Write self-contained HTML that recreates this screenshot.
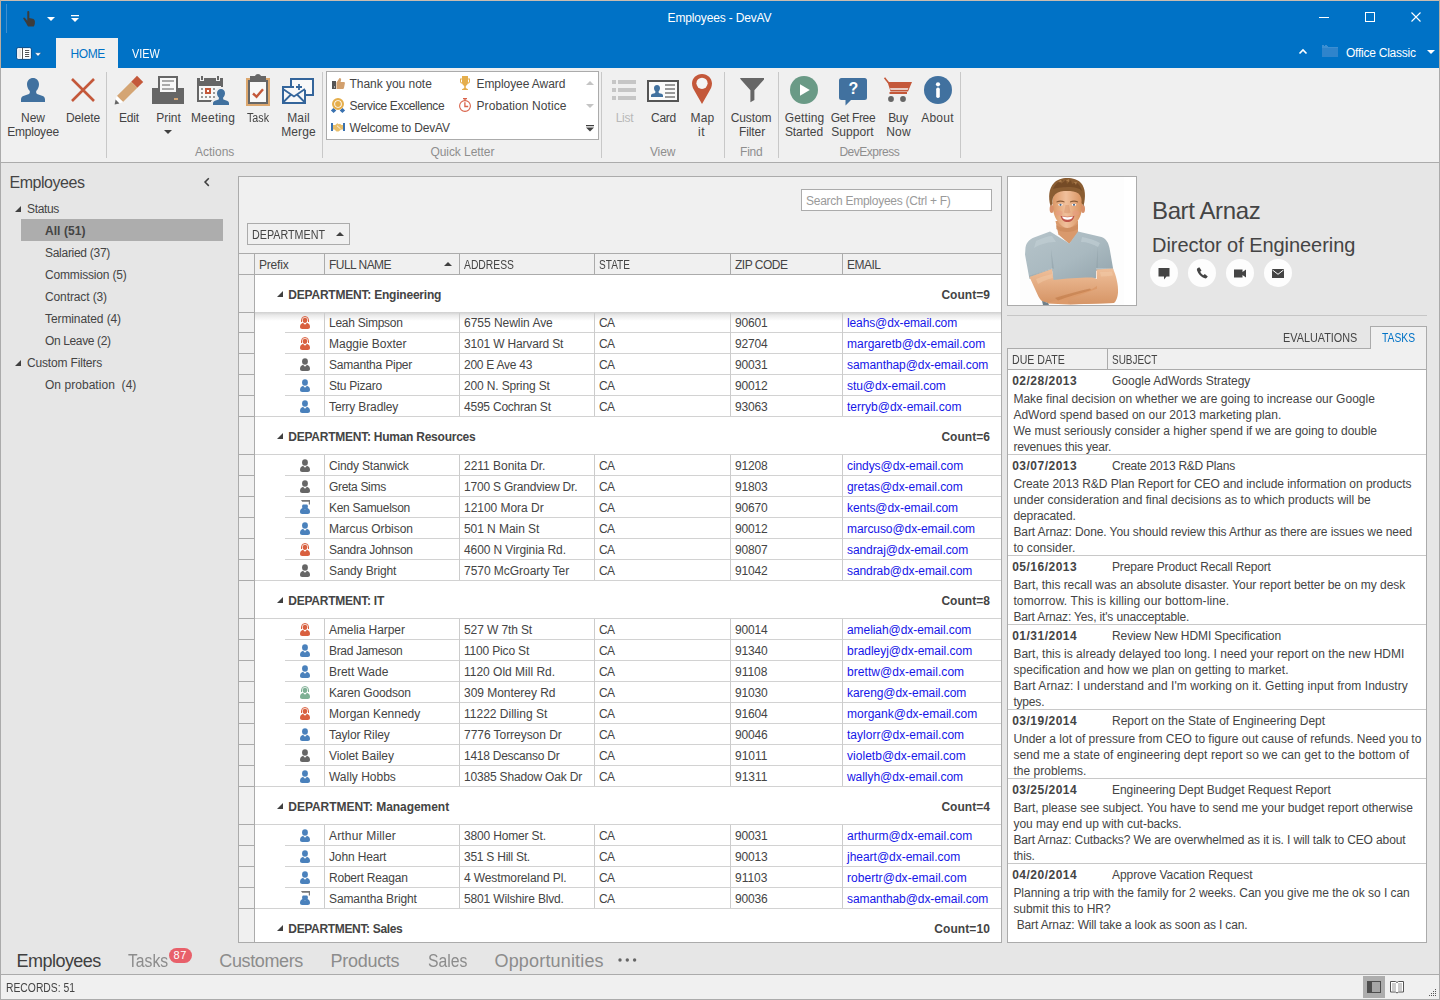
<!DOCTYPE html>
<html>
<head>
<meta charset="utf-8">
<title>Employees - DevAV</title>
<style>
*{box-sizing:border-box;margin:0;padding:0}
html,body{width:1440px;height:1000px;overflow:hidden}
body{font-family:"Liberation Sans",sans-serif;font-size:12px;color:#444444;background:#e6e6e6;position:relative}
.abs{position:absolute}
.t{position:absolute;white-space:pre;line-height:16px}
svg{position:absolute;overflow:visible}
/* window frame */
#frame{position:absolute;left:0;top:0;width:1440px;height:1000px;border:1px solid #ababab;border-top-color:#c9bcb0;pointer-events:none;z-index:50}
#titlebar{position:absolute;left:1px;top:1px;width:1438px;height:67px;background:#0072c6}
#ribbon{position:absolute;left:1px;top:68px;width:1438px;height:94px;background:#f0f0f0}
#ribbonline{position:absolute;left:1px;top:162px;width:1438px;height:1px;background:#ababab}
.rsep{position:absolute;top:72px;width:1px;height:86px;background:#c8c8c8}
.rl{position:absolute;white-space:nowrap;text-align:center;line-height:14px;font-size:12px;color:#404040;letter-spacing:-0.2px;transform:translateX(-50%)}
.gl{position:absolute;white-space:nowrap;font-size:12px;line-height:14px;color:#9a9a9a;transform:translateX(-50%);top:145px;letter-spacing:-0.2px}
</style>
</head>
<body>
<div id="titlebar"></div>
<div id="ribbon"></div>
<div id="ribbonline"></div>
<div class="abs" style="left:6px;top:4px;width:1px;height:29px;background:#3d8fd2"></div>
<svg style="left:22.500px;top:10.500px" width="13" height="15.800" viewBox="0 0 14 17"><path fill="#3c3c3c" d="M4.6 1.2c0-.7.5-1.2 1.1-1.2s1.1.5 1.1 1.2v6.2l3.6.9c1.5.4 2.4 1.3 2.4 2.8v1.8c0 1.6-.7 3.1-1.300 3.800H5.500c-.6-1-1.900-3.400-3.100-5.200l-1.900-2.800c-.4-.6-.3-1.200.2-1.500.5-.3 1.100-.1 1.500.4l2.400 3z"/></svg>
<svg style="left:47px;top:17px" width="8" height="4"><path fill="#fff" d="M0 0h8l-4 4z"/></svg>
<svg style="left:71px;top:15px" width="8" height="7"><path fill="#fff" d="M0 0h8v1.200h-8zM0 3h8l-4 4z"/></svg>
<div class="t" style="left:667.571px;top:10px;font-size:12px;line-height:16px;letter-spacing:-0.155px;color:#fff;">Employees - DevAV</div>
<div class="abs" style="left:1319px;top:17px;width:10px;height:1px;background:#fff"></div>
<div class="abs" style="left:1365px;top:12px;width:10px;height:10px;border:1px solid #fff"></div>
<svg style="left:1411px;top:12px" width="10" height="10"><path stroke="#fff" stroke-width="1.1" fill="none" d="M0.500 0.500l9 9M9.500 0.500l-9 9"/></svg>
<svg style="left:16px;top:47px" width="16" height="13" viewBox="0 0 16 13"><rect x="0.600" y="0.600" width="14.800" height="11.800" rx="1.500" fill="#fff" stroke="#004a8c" stroke-width="1"/><rect x="2.300" y="2.200" width="2.600" height="8.600" fill="#e6e6e6"/><rect x="6" y="0.800" width="1" height="11.400" fill="#555"/><path fill="#555" d="M9 3h4.200v1h-4.200zM9 5h4.200v1h-4.200zM9 7h4.200v1h-4.200zM9 9h4.200v1h-4.200z"/></svg>
<svg style="left:34px;top:52px" width="8" height="5"><path fill="#fff" stroke="#004a8c" stroke-width=".5" d="M0.700 0.800h6.600l-3.300 3.500z"/></svg>
<div class="abs" style="left:56px;top:38px;width:62px;height:30px;background:#f0f0f0"></div>
<div class="t" style="left:70.5px;top:46px;font-size:12px;line-height:16px;letter-spacing:-0.396px;color:#0072c6;">HOME</div>
<div class="t" style="left:132px;top:46px;font-size:12px;line-height:16px;letter-spacing:0px;color:#fff;transform:scaleX(0.9067);transform-origin:0 0;">VIEW</div>
<svg style="left:1299px;top:49px" width="8" height="5"><path stroke="#fff" stroke-width="1.600" fill="none" d="M0.5 4.500l3.500-3.500l3.500 3.500"/></svg>
<svg style="left:1322px;top:45px" width="16" height="12" viewBox="0 0 16 12"><path fill="#3d8fd2" d="M0 0h2v1h1v-1h2v1h1v1h10v10h-16z"/><path fill="#2f84cc" d="M0 3h16v9h-16z"/></svg>
<div class="t" style="left:1346px;top:44.5px;font-size:12px;line-height:16px;letter-spacing:-0.249px;color:#fff;">Office Classic</div>
<svg style="left:1427px;top:50px" width="8" height="4"><path fill="#fff" d="M0 0h8l-4 4z"/></svg>
<div class="rsep" style="left:106px"></div>
<div class="rsep" style="left:322px"></div>
<div class="rsep" style="left:601px"></div>
<div class="rsep" style="left:724px"></div>
<div class="rsep" style="left:778px"></div>
<div class="rsep" style="left:960px"></div>
<svg style="left:21px;top:78px" width="24" height="24" viewBox="0 0 24 24"><path fill="#41719f" d="M12 0c3.400 0 6 2.600 6 6.200c0 2.600-1.200 5.200-2.800 6.700v1.600c0 .9.500 1.500 1.500 1.800l4.300 1.400c1.900.6 3 1.800 3 3.800v2.500h-24v-2.500c0-2 1.100-3.200 3-3.800l4.300-1.400c1-.3 1.500-.9 1.500-1.800v-1.600c-1.600-1.500-2.800-4.100-2.800-6.700c0-3.600 2.600-6.200 6-6.200z"/></svg>
<div class="t" style="left:21.0352px;top:111px;font-size:12px;line-height:14px;letter-spacing:-0.025px;">New</div>
<div class="t" style="left:7.13086px;top:125px;font-size:12px;line-height:14px;letter-spacing:-0.203px;">Employee</div>
<svg style="left:71px;top:78px" width="24" height="24"><path stroke="#c4583a" stroke-width="2.600" fill="none" d="M1 1l22 22M23 1l-22 22"/></svg>
<div class="t" style="left:65.8936px;top:111px;font-size:12px;line-height:14px;letter-spacing:-0.079px;">Delete</div>
<svg style="left:114px;top:75px" width="30" height="30" viewBox="0 0 30 30">
<path fill="#c4583a" d="M23 0.800l6.200 6.100l-5.900 5.900l-6.100-6.100z"/>
<path fill="#d4a574" d="M17.200 6.700l6.100 6.100l-14.300 14.300l-6.100-6.100z"/>
<path fill="#fff" d="M2.900 21l6.100 6.100l-3.600 1.300l-3.800-3.800z"/>
<path fill="#666666" d="M1.600 24.600l3.800 3.800l-4.800 1.200z"/></svg>
<div class="t" style="left:118.945px;top:111px;font-size:12px;line-height:14px;letter-spacing:-0.142px;">Edit</div>
<svg style="left:152px;top:76px" width="32" height="28" viewBox="0 0 32 28">
<path fill="#666666" d="M0 12h32v16h-32z"/><path fill="#666666" d="M6 0h20v16h-20z"/><path fill="#f8f8f8" d="M8 2h16v14h-16z"/>
<path fill="#ababab" d="M10 4h12v2h-12zM10 8h8v2h-8zM10 12h12v2h-12z"/><path fill="#d4a574" d="M22 22h4v2h-4z"/></svg>
<div class="t" style="left:156.169px;top:111px;font-size:12px;line-height:14px;letter-spacing:-0.003px;">Print</div>
<svg style="left:164px;top:130px" width="8" height="4"><path fill="#404040" d="M0 0h8l-4 4z"/></svg>
<svg style="left:197px;top:76px" width="33" height="30" viewBox="0 0 33 30">
<path fill="#666666" d="M0 2h26v24h-26z"/><path fill="#f8f8f8" d="M2 10h22v14h-22z"/>
<path fill="#f0f0f0" d="M3 0h4v5h-4zM19 0h4v5h-4z"/><path fill="#666666" d="M4 0h2v4h-2zM20 0h2v4h-2z"/>
<path fill="#999" d="M4 12h2v2h-2zM4 16h2v2h-2zM4 20h2v2h-2zM8 20h2v2h-2zM12 20h2v2h-2zM16 20h2v2h-2zM16 12h2v2h-2zM16 16h2v2h-2z"/>
<path fill="#c4583a" d="M8 12h6v6h-6z"/><path fill="#fff" d="M10 14h2v2h-2z"/>
<path fill="#f0f0f0" d="M14 30v-5l4-3v-8l4-3h4l4 3v8l3 3v5z"/></svg>
<svg style="left:213px;top:88px" width="16" height="18" viewBox="0 0 24 24"><path fill="#41719f" d="M12 0c3.400 0 6 2.600 6 6.200c0 2.600-1.200 5.200-2.800 6.700v1.600c0 .9.500 1.500 1.500 1.800l4.300 1.400c1.900.6 3 1.800 3 3.800v2.500h-24v-2.500c0-2 1.100-3.200 3-3.800l4.300-1.400c1-.3 1.500-.9 1.500-1.800v-1.600c-1.600-1.500-2.800-4.100-2.800-6.700c0-3.600 2.600-6.200 6-6.200z"/></svg>
<div class="t" style="left:190.919px;top:111px;font-size:12px;line-height:14px;letter-spacing:0.21px;">Meeting</div>
<svg style="left:246px;top:74px" width="24" height="32" viewBox="0 0 24 32">
<path fill="#dca76e" d="M0 4h24v28h-24z"/><path fill="#666666" d="M2 6h20v24h-20z"/><path fill="#f8f8f8" d="M4 8h16v20h-16z"/>
<path fill="#666666" d="M4 2h5c.5-1.200 1.600-2 3-2s2.500.8 3 2h5v6h-16z"/>
<path fill="none" stroke="#c4583a" stroke-width="2.400" d="M7 19.500l3.500 3.200l6.500-7.500"/></svg>
<div class="t" style="left:247px;top:111px;font-size:12px;line-height:14px;letter-spacing:0px;transform:scaleX(0.8916);transform-origin:0 0;">Task</div>
<svg style="left:282px;top:78px" width="32" height="26" viewBox="0 0 32 26">
<rect x="9" y="1" width="22" height="16" fill="#f8f8f8" stroke="#34659b" stroke-width="2"/>
<rect x="1" y="9" width="22" height="16" fill="#f8f8f8" stroke="#34659b" stroke-width="2"/>
<path fill="#f8f8f8" d="M12 6h12v6h-12z"/>
<path fill="none" stroke="#34659b" stroke-width="1.800" d="M1 11l11 7.500l11-7.500M1 24.500l8-8M23 24.500l-8-8M17 6v6M14 9h6"/></svg>
<div class="t" style="left:287.15px;top:111px;font-size:12px;line-height:14px;letter-spacing:0.174px;">Mail</div>
<div class="t" style="left:281.212px;top:125px;font-size:12px;line-height:14px;letter-spacing:0.112px;">Merge</div>
<div class="t" style="left:195.115px;top:145px;font-size:12px;line-height:14px;letter-spacing:-0.026px;color:#8e8e8e;">Actions</div>
<div class="abs" style="left:326px;top:71px;width:273px;height:69px;background:#fff;border:1px solid #ababab"></div>
<svg style="left:332px;top:78px" width="13" height="11" viewBox="0 0 13 11"><path fill="#555" d="M0 3h4v8h-4z"/><path fill="#fff" d="M2 8.500h1v1h-1z"/>
<path fill="#d2a06e" d="M4.500 4.500l3-4.500c1.300 0 1.800.8 1.600 1.800l-.5 2.200h3.200c.8 0 1.200.6 1.100 1.300l-.9 4.700c-.2.700-.6 1-1.300 1h-6.200z"/></svg>
<div class="t" style="left:349.5px;top:77px;font-size:12px;line-height:14px;letter-spacing:-0.03px;">Thank you note</div>
<svg style="left:331px;top:98px" width="14" height="15" viewBox="0 0 14 15"><path fill="#3a72b0" d="M2.600 9.800l2.700 2.600l-2.700 2.600l-2.700-2.600zM11.400 9.800l2.700 2.600l-2.700 2.600l-2.700-2.600z"/><circle cx="7" cy="6" r="6" fill="#fff"/><circle cx="7" cy="6" r="4.900" fill="none" stroke="#e5ae4c" stroke-width="2.200"/><circle cx="7" cy="6" r="2.900" fill="#e5ae4c"/></svg>
<div class="t" style="left:349.5px;top:99px;font-size:12px;line-height:14px;letter-spacing:-0.372px;">Service Excellence</div>
<svg style="left:331px;top:123px" width="14" height="9" viewBox="0 0 14 9"><path fill="#3a72b0" d="M0 0h2v8h-2zM12 0h2v8h-2z"/><path fill="#e8be6a" d="M2 2h2.300l2-1.800l1.600 1l1-.5l1.600 1.300h1.500v4.500h-1.800l-2.700 2h-2l-2-2h-1.500z"/><path stroke="#fff" stroke-width=".8" fill="none" d="M6 2.800l3.500 3"/></svg>
<div class="t" style="left:349.5px;top:121px;font-size:12px;line-height:14px;letter-spacing:-0.158px;">Welcome to DevAV</div>
<svg style="left:460px;top:76px" width="10" height="14" viewBox="0 0 10 14"><path fill="#e5ae4c" d="M2 0h6v2.500h2v3c0 1.200-.9 2-2.200 2.100c-.5 1.300-1.200 2.100-2 2.500v1.900l2.200 1.200v.8h-6v-.8l2.200-1.200v-1.900c-.8-.4-1.500-1.200-2-2.500c-1.300-.1-2.200-.9-2.200-2.100v-3h2zM1 3.500v2c0 .5.400 .9 1 1v-3zM9 3.500h-1v3c.6-.1 1-.5 1-1z"/></svg>
<div class="t" style="left:476.5px;top:77px;font-size:12px;line-height:14px;letter-spacing:-0.074px;">Employee Award</div>
<svg style="left:459px;top:98px" width="12" height="14" viewBox="0 0 12 14"><path fill="#d9634a" d="M4 0h4v1.200h-1.300v1.300h-1.400v-1.300h-1.300z"/><circle cx="6" cy="8" r="5.400" fill="none" stroke="#d9634a" stroke-width="1.100"/><path stroke="#d9634a" stroke-width="1.300" fill="none" d="M5.900 4.300v4.200h3.300"/></svg>
<div class="t" style="left:476.5px;top:99px;font-size:12px;line-height:14px;letter-spacing:0.079px;">Probation Notice</div>
<svg style="left:586px;top:81px" width="8" height="4"><path fill="#c4c4c4" d="M0 4h8l-4-4z"/></svg>
<svg style="left:586px;top:104px" width="8" height="4"><path fill="#c4c4c4" d="M0 0h8l-4 4z"/></svg>
<svg style="left:586px;top:125px" width="8" height="7"><path fill="#404040" d="M0 0h8v1.300h-8zM0 2.500h8l-4 4z"/></svg>
<div class="t" style="left:430.376px;top:145px;font-size:12px;line-height:14px;letter-spacing:-0.054px;color:#8e8e8e;">Quick Letter</div>
<svg style="left:612px;top:80px" width="24" height="20"><path fill="#c6c6c6" d="M0 0h4v4h-4zM6 0h18v4h-18zM0 8h4v4h-4zM6 8h18v4h-18zM0 16h4v4h-4zM6 16h18v4h-18z"/></svg>
<div class="t" style="left:615.644px;top:111px;font-size:12px;line-height:14px;letter-spacing:-0.24px;color:#b8b8b8;">List</div>
<svg style="left:647px;top:80px" width="32" height="22" viewBox="0 0 32 22"><rect x="1" y="1" width="30" height="20" fill="#fafafa" stroke="#555" stroke-width="2"/>
<path fill="#999" d="M18 4h10v2h-10zM18 8h10v2h-10zM18 12h10v2h-10zM18 16h10v2h-10z"/></svg>
<svg style="left:651px;top:84px" width="12" height="14" viewBox="0 0 24 24"><path fill="#41719f" d="M12 0c3.400 0 6 2.600 6 6.200c0 2.600-1.200 5.200-2.800 6.700v1.600c0 .9.500 1.500 1.500 1.800l4.300 1.400c1.900.6 3 1.800 3 3.800v2.500h-24v-2.500c0-2 1.100-3.200 3-3.800l4.300-1.400c1-.3 1.500-.9 1.500-1.800v-1.600c-1.600-1.500-2.800-4.100-2.800-6.700c0-3.600 2.600-6.200 6-6.200z"/></svg>
<div class="t" style="left:651.11px;top:111px;font-size:12px;line-height:14px;letter-spacing:-0.308px;">Card</div>
<svg style="left:692px;top:74px" width="20" height="30" viewBox="0 0 20 30"><path fill="#c4583a" d="M10 0c5.600 0 10 4.300 10 9.600c0 3.200-1.500 5.800-3 8.200l-7 12.200l-7-12.200c-1.500-2.400-3-5-3-8.200c0-5.300 4.400-9.600 10-9.600z"/><circle cx="10" cy="9.300" r="5.600" fill="#f4f4f4"/></svg>
<div class="t" style="left:690.529px;top:111px;font-size:12px;line-height:14px;letter-spacing:0.199px;">Map</div>
<div class="t" style="left:698.014px;top:125px;font-size:12px;line-height:14px;letter-spacing:0.486px;">it</div>
<div class="t" style="left:649.935px;top:145px;font-size:12px;line-height:14px;letter-spacing:-0.116px;color:#8e8e8e;">View</div>
<svg style="left:740px;top:78px" width="24" height="24" viewBox="0 0 24 24"><path fill="#666666" d="M0 0h24v1.500l-9.600 10.700v9.800l-4 2.200v-12l-9.600-10.700z"/></svg>
<div class="t" style="left:730.636px;top:111px;font-size:12px;line-height:14px;letter-spacing:-0.103px;">Custom</div>
<div class="t" style="left:738.907px;top:125px;font-size:12px;line-height:14px;letter-spacing:-0.08px;">Filter</div>
<div class="t" style="left:739.991px;top:145px;font-size:12px;line-height:14px;letter-spacing:-0.181px;color:#8e8e8e;">Find</div>
<svg style="left:790px;top:76px" width="28" height="28"><circle cx="14" cy="14" r="14" fill="#6a9a86"/><path fill="#fff" d="M10 8.200l9.800 5.800l-9.800 5.800z"/></svg>
<div class="t" style="left:784.798px;top:111px;font-size:12px;line-height:14px;letter-spacing:0.102px;">Getting</div>
<div class="t" style="left:784.934px;top:125px;font-size:12px;line-height:14px;letter-spacing:-0.08px;">Started</div>
<svg style="left:839px;top:78px" width="28" height="28" viewBox="0 0 28 28"><path fill="#41719f" d="M2.500 0h23a2.500 2.500 0 0 1 2.500 2.500v17a2.500 2.500 0 0 1-2.500 2.500h-13.500l-5.500 5.500v-5.500h-4a2.500 2.500 0 0 1-2.500-2.500v-17a2.500 2.500 0 0 1 2.500-2.500z"/></svg>
<div class="t" style="left:848.500px;top:79px;font-size:16px;line-height:20px;font-weight:bold;color:#fff;letter-spacing:0">?</div>
<div class="t" style="left:830.778px;top:111px;font-size:12px;line-height:14px;letter-spacing:-0.363px;">Get Free</div>
<div class="t" style="left:831.225px;top:125px;font-size:12px;line-height:14px;letter-spacing:0.074px;">Support</div>
<svg style="left:884px;top:77px" width="28" height="26" viewBox="0 0 28 26"><path fill="none" stroke="#c4583a" stroke-width="1.600" d="M0.500 0.800l4 5"/><path fill="#c4583a" d="M3.500 5h24.500l-4 9.500h-17.500zM5.500 15h17.500v2h-17.500z"/><path fill="#f4f4f4" d="M6 11.200h18.300l-.6 1.500h-17.200z"/><circle cx="7" cy="22" r="2.900" fill="#666666"/><circle cx="19" cy="22" r="2.900" fill="#666666"/></svg>
<div class="t" style="left:888.262px;top:111px;font-size:12px;line-height:14px;letter-spacing:-0.401px;">Buy</div>
<div class="t" style="left:886.157px;top:125px;font-size:12px;line-height:14px;letter-spacing:0.227px;">Now</div>
<svg style="left:924px;top:76px" width="28" height="28"><circle cx="14" cy="14" r="14" fill="#41719f"/><circle cx="14" cy="8.300" r="2.100" fill="#fff"/><rect x="12.200" y="11.500" width="3.600" height="10.500" rx="1.700" fill="#fff"/></svg>
<div class="t" style="left:921.158px;top:111px;font-size:12px;line-height:14px;letter-spacing:0.265px;">About</div>
<div class="t" style="left:839.446px;top:145px;font-size:12px;line-height:14px;letter-spacing:-0.498px;color:#8e8e8e;">DevExpress</div>
<div class="t" style="left:9.5px;top:173px;font-size:16px;line-height:20px;letter-spacing:-0.461px;">Employees</div>
<svg style="left:204px;top:178px" width="6" height="9"><path fill="none" stroke="#404040" stroke-width="1.500" d="M4.800 0.300l-3.800 3.800l3.800 3.800"/></svg>
<svg style="left:14.5px;top:205.5px" width="6" height="6"><path fill="#404040" d="M6 0v6h-6z"/></svg>
<div class="t" style="left:27px;top:201px;font-size:12px;line-height:16px;letter-spacing:-0.337px;">Status</div>
<div class="abs" style="left:21px;top:219px;width:202px;height:22px;background:#adadad"></div>
<div class="t" style="left:45px;top:223px;font-size:12px;line-height:16px;letter-spacing:0.061px;font-weight:bold;">All (51)</div>
<div class="t" style="left:45px;top:245px;font-size:12px;line-height:16px;letter-spacing:-0.285px;">Salaried (37)</div>
<div class="t" style="left:45px;top:267px;font-size:12px;line-height:16px;letter-spacing:-0.172px;">Commission (5)</div>
<div class="t" style="left:45px;top:289px;font-size:12px;line-height:16px;letter-spacing:-0.113px;">Contract (3)</div>
<div class="t" style="left:45px;top:311px;font-size:12px;line-height:16px;letter-spacing:-0.097px;">Terminated (4)</div>
<div class="t" style="left:45px;top:333px;font-size:12px;line-height:16px;letter-spacing:-0.37px;">On Leave (2)</div>
<svg style="left:14.5px;top:359.5px" width="6" height="6"><path fill="#404040" d="M6 0v6h-6z"/></svg>
<div class="t" style="left:27px;top:355px;font-size:12px;line-height:16px;letter-spacing:-0.167px;">Custom Filters</div>
<div class="t" style="left:45px;top:377px;font-size:12px;line-height:16px;letter-spacing:0.04px;">On probation  (4)</div>
<div class="abs" style="left:238px;top:176px;width:764px;height:767px;background:#f0f0f0;border:1px solid #ababab"></div>
<div class="abs" style="left:255px;top:275px;width:746px;height:667px;background:#fff"></div>
<div class="abs" style="left:801px;top:189px;width:191px;height:22px;background:#fff;border:1px solid #ababab"></div>
<div class="t" style="left:806px;top:193px;font-size:12px;line-height:16px;letter-spacing:-0.267px;color:#9a9a9a;">Search Employees (Ctrl + F)</div>
<div class="abs" style="left:247px;top:223px;width:103px;height:22px;border:1px solid #ababab;background:#f0f0f0"></div>
<div class="t" style="left:252px;top:227px;font-size:12px;line-height:16px;letter-spacing:0px;transform:scaleX(0.8950);transform-origin:0 0;">DEPARTMENT</div>
<svg style="left:335.500px;top:232px" width="8" height="4"><path fill="#404040" d="M0 4h8l-4-4z"/></svg>
<div class="abs" style="left:239px;top:253px;width:762px;height:1px;background:#ababab"></div>
<div class="abs" style="left:239px;top:274px;width:762px;height:1px;background:#ababab"></div>
<div class="abs" style="left:254px;top:254px;width:1px;height:688px;background:#ababab"></div>
<div class="abs" style="left:324px;top:254px;width:1px;height:20px;background:#ababab"></div>
<div class="abs" style="left:459px;top:254px;width:1px;height:20px;background:#ababab"></div>
<div class="abs" style="left:594px;top:254px;width:1px;height:20px;background:#ababab"></div>
<div class="abs" style="left:730px;top:254px;width:1px;height:20px;background:#ababab"></div>
<div class="abs" style="left:842px;top:254px;width:1px;height:20px;background:#ababab"></div>
<div class="t" style="left:259px;top:257px;font-size:12px;line-height:16px;letter-spacing:-0.196px;">Prefix</div>
<div class="t" style="left:329px;top:257px;font-size:12px;line-height:16px;letter-spacing:-0.545px;">FULL NAME</div>
<div class="t" style="left:464px;top:257px;font-size:12px;line-height:16px;letter-spacing:0px;transform:scaleX(0.8618);transform-origin:0 0;">ADDRESS</div>
<div class="t" style="left:599px;top:257px;font-size:12px;line-height:16px;letter-spacing:0px;transform:scaleX(0.8403);transform-origin:0 0;">STATE</div>
<div class="t" style="left:735px;top:257px;font-size:12px;line-height:16px;letter-spacing:-0.495px;">ZIP CODE</div>
<div class="t" style="left:847px;top:257px;font-size:12px;line-height:16px;letter-spacing:-0.503px;">EMAIL</div>
<svg style="left:443.500px;top:262px" width="8" height="4"><path fill="#404040" d="M0 4h8l-4-4z"/></svg>
<svg style="left:277px;top:290.5px" width="6" height="6"><path fill="#404040" d="M6 0v6h-6z"/></svg>
<div class="t" style="left:288.3px;top:287px;font-size:12px;line-height:16px;letter-spacing:-0.214px;font-weight:bold;">DEPARTMENT: Engineering</div>
<div class="t" style="left:941.4px;top:287px;font-size:12px;line-height:16px;letter-spacing:0.038px;font-weight:bold;">Count=9</div>
<div class="abs" style="left:239px;top:312px;width:15px;height:1px;background:#ababab"></div>
<div class="abs" style="left:255px;top:312px;width:746px;height:9px;background:linear-gradient(#cfcfcf,#e9e9e9 35%,#fff)"></div>
<svg style="left:300px;top:316px" width="10" height="13" viewBox="0 0 10 13"><path fill="#d9603f" d="M2.200 13c-1.400 0-2.200-.8-2.200-2.200c0-2 1-3.400 3-4.100l2 2.100l2-2.100c2 .7 3 2.100 3 4.100c0 1.400-.8 2.200-2.200 2.200z"/><ellipse cx="5" cy="4.300" rx="2.300" ry="2.600" fill="#d9603f"/><path fill="none" stroke="#d9603f" stroke-width="1" d="M1.500 6v-2a3.500 3.500 0 0 1 7 0v2"/></svg>
<div class="t" style="left:329px;top:315px;font-size:12px;line-height:16px;letter-spacing:-0.253px;">Leah Simpson</div>
<div class="t" style="left:464px;top:315px;font-size:12px;line-height:16px;letter-spacing:-0.028px;">6755 Newlin Ave</div>
<div class="t" style="left:599px;top:315px;font-size:12px;line-height:16px;letter-spacing:-0.585px;">CA</div>
<div class="t" style="left:735px;top:315px;font-size:12px;line-height:16px;letter-spacing:-0.205px;">90601</div>
<div class="t" style="left:847px;top:315px;font-size:12px;line-height:16px;letter-spacing:-0.123px;color:#1515e8;">leahs@dx-email.com</div>
<div class="abs" style="left:239px;top:332px;width:15px;height:1px;background:#ababab"></div>
<div class="abs" style="left:285px;top:332px;width:716px;height:1px;background:#d2d2d2"></div>
<svg style="left:300px;top:337px" width="10" height="13" viewBox="0 0 10 13"><path fill="#d9603f" d="M2.200 13c-1.400 0-2.200-.8-2.200-2.200c0-2 1-3.400 3-4.100l2 2.100l2-2.100c2 .7 3 2.100 3 4.100c0 1.400-.8 2.200-2.200 2.200z"/><ellipse cx="5" cy="4.300" rx="2.300" ry="2.600" fill="#d9603f"/><path fill="none" stroke="#d9603f" stroke-width="1" d="M1.500 6v-2a3.500 3.500 0 0 1 7 0v2"/></svg>
<div class="t" style="left:329px;top:336px;font-size:12px;line-height:16px;letter-spacing:0.004px;">Maggie Boxter</div>
<div class="t" style="left:464px;top:336px;font-size:12px;line-height:16px;letter-spacing:-0.17px;">3101 W Harvard St</div>
<div class="t" style="left:599px;top:336px;font-size:12px;line-height:16px;letter-spacing:-0.585px;">CA</div>
<div class="t" style="left:735px;top:336px;font-size:12px;line-height:16px;letter-spacing:-0.205px;">92704</div>
<div class="t" style="left:847px;top:336px;font-size:12px;line-height:16px;letter-spacing:-0.002px;color:#1515e8;">margaretb@dx-email.com</div>
<div class="abs" style="left:239px;top:353px;width:15px;height:1px;background:#ababab"></div>
<div class="abs" style="left:285px;top:353px;width:716px;height:1px;background:#d2d2d2"></div>
<svg style="left:300px;top:358px" width="10" height="13" viewBox="0 0 10 13"><path fill="#666666" d="M2.200 13c-1.400 0-2.200-.8-2.200-2.200c0-2 1-3.400 3-4.100l2 2.100l2-2.100c2 .7 3 2.100 3 4.100c0 1.400-.8 2.200-2.200 2.200z"/><ellipse cx="5" cy="3.500" rx="2.900" ry="3.300" fill="#666666"/></svg>
<div class="t" style="left:329px;top:357px;font-size:12px;line-height:16px;letter-spacing:-0.212px;">Samantha Piper</div>
<div class="t" style="left:464px;top:357px;font-size:12px;line-height:16px;letter-spacing:-0.261px;">200 E Ave 43</div>
<div class="t" style="left:599px;top:357px;font-size:12px;line-height:16px;letter-spacing:-0.585px;">CA</div>
<div class="t" style="left:735px;top:357px;font-size:12px;line-height:16px;letter-spacing:-0.205px;">90031</div>
<div class="t" style="left:847px;top:357px;font-size:12px;line-height:16px;letter-spacing:-0.074px;color:#1515e8;">samanthap@dx-email.com</div>
<div class="abs" style="left:239px;top:374px;width:15px;height:1px;background:#ababab"></div>
<div class="abs" style="left:285px;top:374px;width:716px;height:1px;background:#d2d2d2"></div>
<svg style="left:300px;top:379px" width="10" height="13" viewBox="0 0 10 13"><path fill="#4a81bc" d="M2.200 13c-1.400 0-2.200-.8-2.200-2.200c0-2 1-3.400 3-4.100l2 2.100l2-2.100c2 .7 3 2.100 3 4.100c0 1.400-.8 2.200-2.200 2.200z"/><ellipse cx="5" cy="3.500" rx="2.900" ry="3.300" fill="#4a81bc"/></svg>
<div class="t" style="left:329px;top:378px;font-size:12px;line-height:16px;letter-spacing:-0.247px;">Stu Pizaro</div>
<div class="t" style="left:464px;top:378px;font-size:12px;line-height:16px;letter-spacing:-0.149px;">200 N. Spring St</div>
<div class="t" style="left:599px;top:378px;font-size:12px;line-height:16px;letter-spacing:-0.585px;">CA</div>
<div class="t" style="left:735px;top:378px;font-size:12px;line-height:16px;letter-spacing:-0.205px;">90012</div>
<div class="t" style="left:847px;top:378px;font-size:12px;line-height:16px;letter-spacing:-0.047px;color:#1515e8;">stu@dx-email.com</div>
<div class="abs" style="left:239px;top:395px;width:15px;height:1px;background:#ababab"></div>
<div class="abs" style="left:285px;top:395px;width:716px;height:1px;background:#d2d2d2"></div>
<svg style="left:300px;top:400px" width="10" height="13" viewBox="0 0 10 13"><path fill="#4a81bc" d="M2.200 13c-1.400 0-2.200-.8-2.200-2.200c0-2 1-3.400 3-4.100l2 2.100l2-2.100c2 .7 3 2.100 3 4.100c0 1.400-.8 2.200-2.200 2.200z"/><ellipse cx="5" cy="3.500" rx="2.900" ry="3.300" fill="#4a81bc"/></svg>
<div class="t" style="left:329px;top:399px;font-size:12px;line-height:16px;letter-spacing:-0.112px;">Terry Bradley</div>
<div class="t" style="left:464px;top:399px;font-size:12px;line-height:16px;letter-spacing:-0.22px;">4595 Cochran St</div>
<div class="t" style="left:599px;top:399px;font-size:12px;line-height:16px;letter-spacing:-0.585px;">CA</div>
<div class="t" style="left:735px;top:399px;font-size:12px;line-height:16px;letter-spacing:-0.205px;">93063</div>
<div class="t" style="left:847px;top:399px;font-size:12px;line-height:16px;letter-spacing:0.01px;color:#1515e8;">terryb@dx-email.com</div>
<div class="abs" style="left:239px;top:416px;width:15px;height:1px;background:#ababab"></div>
<div class="abs" style="left:255px;top:416px;width:746px;height:1px;background:#d2d2d2"></div>
<div class="abs" style="left:324px;top:313px;width:1px;height:103px;background:#cccccc"></div>
<div class="abs" style="left:459px;top:313px;width:1px;height:103px;background:#cccccc"></div>
<div class="abs" style="left:594px;top:313px;width:1px;height:103px;background:#cccccc"></div>
<div class="abs" style="left:730px;top:313px;width:1px;height:103px;background:#cccccc"></div>
<div class="abs" style="left:842px;top:313px;width:1px;height:103px;background:#cccccc"></div>
<svg style="left:277px;top:432.5px" width="6" height="6"><path fill="#404040" d="M6 0v6h-6z"/></svg>
<div class="t" style="left:288.3px;top:429px;font-size:12px;line-height:16px;letter-spacing:-0.248px;font-weight:bold;">DEPARTMENT: Human Resources</div>
<div class="t" style="left:941.4px;top:429px;font-size:12px;line-height:16px;letter-spacing:0.038px;font-weight:bold;">Count=6</div>
<div class="abs" style="left:239px;top:454px;width:15px;height:1px;background:#ababab"></div>
<div class="abs" style="left:255px;top:454px;width:746px;height:1px;background:#d2d2d2"></div>
<svg style="left:300px;top:459px" width="10" height="13" viewBox="0 0 10 13"><path fill="#666666" d="M2.200 13c-1.400 0-2.200-.8-2.200-2.200c0-2 1-3.400 3-4.100l2 2.100l2-2.100c2 .7 3 2.100 3 4.100c0 1.400-.8 2.200-2.200 2.200z"/><ellipse cx="5" cy="3.500" rx="2.900" ry="3.300" fill="#666666"/></svg>
<div class="t" style="left:329px;top:458px;font-size:12px;line-height:16px;letter-spacing:-0.166px;">Cindy Stanwick</div>
<div class="t" style="left:464px;top:458px;font-size:12px;line-height:16px;letter-spacing:-0.027px;">2211 Bonita Dr.</div>
<div class="t" style="left:599px;top:458px;font-size:12px;line-height:16px;letter-spacing:-0.585px;">CA</div>
<div class="t" style="left:735px;top:458px;font-size:12px;line-height:16px;letter-spacing:-0.205px;">91208</div>
<div class="t" style="left:847px;top:458px;font-size:12px;line-height:16px;letter-spacing:-0.079px;color:#1515e8;">cindys@dx-email.com</div>
<div class="abs" style="left:239px;top:475px;width:15px;height:1px;background:#ababab"></div>
<div class="abs" style="left:285px;top:475px;width:716px;height:1px;background:#d2d2d2"></div>
<svg style="left:300px;top:480px" width="10" height="13" viewBox="0 0 10 13"><path fill="#666666" d="M2.200 13c-1.400 0-2.200-.8-2.200-2.200c0-2 1-3.400 3-4.100l2 2.100l2-2.100c2 .7 3 2.100 3 4.100c0 1.400-.8 2.200-2.200 2.200z"/><ellipse cx="5" cy="3.500" rx="2.900" ry="3.300" fill="#666666"/></svg>
<div class="t" style="left:329px;top:479px;font-size:12px;line-height:16px;letter-spacing:-0.318px;">Greta Sims</div>
<div class="t" style="left:464px;top:479px;font-size:12px;line-height:16px;letter-spacing:-0.206px;">1700 S Grandview Dr.</div>
<div class="t" style="left:599px;top:479px;font-size:12px;line-height:16px;letter-spacing:-0.585px;">CA</div>
<div class="t" style="left:735px;top:479px;font-size:12px;line-height:16px;letter-spacing:-0.205px;">91803</div>
<div class="t" style="left:847px;top:479px;font-size:12px;line-height:16px;letter-spacing:-0.066px;color:#1515e8;">gretas@dx-email.com</div>
<div class="abs" style="left:239px;top:496px;width:15px;height:1px;background:#ababab"></div>
<div class="abs" style="left:285px;top:496px;width:716px;height:1px;background:#d2d2d2"></div>
<svg style="left:300px;top:501px" width="10" height="13" viewBox="0 0 10 13"><path fill="#4a81bc" d="M2.200 13c-1.400 0-2.200-.8-2.200-2.200c0-2 1-3.400 3-4.100l2 2.100l2-2.100c2 .7 3 2.100 3 4.100c0 1.400-.8 2.200-2.200 2.200z"/><ellipse cx="5" cy="5.600" rx="2.900" ry="3" fill="#4a81bc"/><path fill="#fff" d="M1 1h8v2.500h-8z"/><path fill="#777" d="M1 -1h9v4.500h-1.200v-2.800h-6.600z"/></svg>
<div class="t" style="left:329px;top:500px;font-size:12px;line-height:16px;letter-spacing:-0.286px;">Ken Samuelson</div>
<div class="t" style="left:464px;top:500px;font-size:12px;line-height:16px;letter-spacing:-0.033px;">12100 Mora Dr</div>
<div class="t" style="left:599px;top:500px;font-size:12px;line-height:16px;letter-spacing:-0.585px;">CA</div>
<div class="t" style="left:735px;top:500px;font-size:12px;line-height:16px;letter-spacing:-0.205px;">90670</div>
<div class="t" style="left:847px;top:500px;font-size:12px;line-height:16px;letter-spacing:-0.066px;color:#1515e8;">kents@dx-email.com</div>
<div class="abs" style="left:239px;top:517px;width:15px;height:1px;background:#ababab"></div>
<div class="abs" style="left:285px;top:517px;width:716px;height:1px;background:#d2d2d2"></div>
<svg style="left:300px;top:522px" width="10" height="13" viewBox="0 0 10 13"><path fill="#4a81bc" d="M2.200 13c-1.400 0-2.200-.8-2.200-2.200c0-2 1-3.400 3-4.100l2 2.100l2-2.100c2 .7 3 2.100 3 4.100c0 1.400-.8 2.200-2.200 2.200z"/><ellipse cx="5" cy="3.500" rx="2.900" ry="3.300" fill="#4a81bc"/></svg>
<div class="t" style="left:329px;top:521px;font-size:12px;line-height:16px;letter-spacing:-0.058px;">Marcus Orbison</div>
<div class="t" style="left:464px;top:521px;font-size:12px;line-height:16px;letter-spacing:-0.059px;">501 N Main St</div>
<div class="t" style="left:599px;top:521px;font-size:12px;line-height:16px;letter-spacing:-0.585px;">CA</div>
<div class="t" style="left:735px;top:521px;font-size:12px;line-height:16px;letter-spacing:-0.205px;">90012</div>
<div class="t" style="left:847px;top:521px;font-size:12px;line-height:16px;letter-spacing:-0.082px;color:#1515e8;">marcuso@dx-email.com</div>
<div class="abs" style="left:239px;top:538px;width:15px;height:1px;background:#ababab"></div>
<div class="abs" style="left:285px;top:538px;width:716px;height:1px;background:#d2d2d2"></div>
<svg style="left:300px;top:543px" width="10" height="13" viewBox="0 0 10 13"><path fill="#d9603f" d="M2.200 13c-1.400 0-2.200-.8-2.200-2.200c0-2 1-3.400 3-4.100l2 2.100l2-2.100c2 .7 3 2.100 3 4.100c0 1.400-.8 2.200-2.200 2.200z"/><ellipse cx="5" cy="4.300" rx="2.300" ry="2.600" fill="#d9603f"/><path fill="none" stroke="#d9603f" stroke-width="1" d="M1.500 6v-2a3.500 3.500 0 0 1 7 0v2"/></svg>
<div class="t" style="left:329px;top:542px;font-size:12px;line-height:16px;letter-spacing:-0.263px;">Sandra Johnson</div>
<div class="t" style="left:464px;top:542px;font-size:12px;line-height:16px;letter-spacing:-0.102px;">4600 N Virginia Rd.</div>
<div class="t" style="left:599px;top:542px;font-size:12px;line-height:16px;letter-spacing:-0.585px;">CA</div>
<div class="t" style="left:735px;top:542px;font-size:12px;line-height:16px;letter-spacing:-0.205px;">90807</div>
<div class="t" style="left:847px;top:542px;font-size:12px;line-height:16px;letter-spacing:-0.09px;color:#1515e8;">sandraj@dx-email.com</div>
<div class="abs" style="left:239px;top:559px;width:15px;height:1px;background:#ababab"></div>
<div class="abs" style="left:285px;top:559px;width:716px;height:1px;background:#d2d2d2"></div>
<svg style="left:300px;top:564px" width="10" height="13" viewBox="0 0 10 13"><path fill="#666666" d="M2.200 13c-1.400 0-2.200-.8-2.200-2.200c0-2 1-3.400 3-4.100l2 2.100l2-2.100c2 .7 3 2.100 3 4.100c0 1.400-.8 2.200-2.200 2.200z"/><ellipse cx="5" cy="3.500" rx="2.900" ry="3.300" fill="#666666"/></svg>
<div class="t" style="left:329px;top:563px;font-size:12px;line-height:16px;letter-spacing:-0.116px;">Sandy Bright</div>
<div class="t" style="left:464px;top:563px;font-size:12px;line-height:16px;letter-spacing:-0.039px;">7570 McGroarty Ter</div>
<div class="t" style="left:599px;top:563px;font-size:12px;line-height:16px;letter-spacing:-0.585px;">CA</div>
<div class="t" style="left:735px;top:563px;font-size:12px;line-height:16px;letter-spacing:-0.205px;">91042</div>
<div class="t" style="left:847px;top:563px;font-size:12px;line-height:16px;letter-spacing:-0.083px;color:#1515e8;">sandrab@dx-email.com</div>
<div class="abs" style="left:239px;top:580px;width:15px;height:1px;background:#ababab"></div>
<div class="abs" style="left:255px;top:580px;width:746px;height:1px;background:#d2d2d2"></div>
<div class="abs" style="left:324px;top:455px;width:1px;height:125px;background:#cccccc"></div>
<div class="abs" style="left:459px;top:455px;width:1px;height:125px;background:#cccccc"></div>
<div class="abs" style="left:594px;top:455px;width:1px;height:125px;background:#cccccc"></div>
<div class="abs" style="left:730px;top:455px;width:1px;height:125px;background:#cccccc"></div>
<div class="abs" style="left:842px;top:455px;width:1px;height:125px;background:#cccccc"></div>
<svg style="left:277px;top:596.5px" width="6" height="6"><path fill="#404040" d="M6 0v6h-6z"/></svg>
<div class="t" style="left:288.3px;top:593px;font-size:12px;line-height:16px;letter-spacing:-0.24px;font-weight:bold;">DEPARTMENT: IT</div>
<div class="t" style="left:941.4px;top:593px;font-size:12px;line-height:16px;letter-spacing:0.038px;font-weight:bold;">Count=8</div>
<div class="abs" style="left:239px;top:618px;width:15px;height:1px;background:#ababab"></div>
<div class="abs" style="left:255px;top:618px;width:746px;height:1px;background:#d2d2d2"></div>
<svg style="left:300px;top:623px" width="10" height="13" viewBox="0 0 10 13"><path fill="#d9603f" d="M2.200 13c-1.400 0-2.200-.8-2.200-2.200c0-2 1-3.400 3-4.100l2 2.100l2-2.100c2 .7 3 2.100 3 4.100c0 1.400-.8 2.200-2.200 2.200z"/><ellipse cx="5" cy="4.300" rx="2.300" ry="2.600" fill="#d9603f"/><path fill="none" stroke="#d9603f" stroke-width="1" d="M1.500 6v-2a3.500 3.500 0 0 1 7 0v2"/></svg>
<div class="t" style="left:329px;top:622px;font-size:12px;line-height:16px;letter-spacing:-0.065px;">Amelia Harper</div>
<div class="t" style="left:464px;top:622px;font-size:12px;line-height:16px;letter-spacing:-0.106px;">527 W 7th St</div>
<div class="t" style="left:599px;top:622px;font-size:12px;line-height:16px;letter-spacing:-0.585px;">CA</div>
<div class="t" style="left:735px;top:622px;font-size:12px;line-height:16px;letter-spacing:-0.205px;">90014</div>
<div class="t" style="left:847px;top:622px;font-size:12px;line-height:16px;letter-spacing:-0.065px;color:#1515e8;">ameliah@dx-email.com</div>
<div class="abs" style="left:239px;top:639px;width:15px;height:1px;background:#ababab"></div>
<div class="abs" style="left:285px;top:639px;width:716px;height:1px;background:#d2d2d2"></div>
<svg style="left:300px;top:644px" width="10" height="13" viewBox="0 0 10 13"><path fill="#4a81bc" d="M2.200 13c-1.400 0-2.200-.8-2.200-2.200c0-2 1-3.400 3-4.100l2 2.100l2-2.100c2 .7 3 2.100 3 4.100c0 1.400-.8 2.200-2.200 2.200z"/><ellipse cx="5" cy="3.500" rx="2.900" ry="3.300" fill="#4a81bc"/></svg>
<div class="t" style="left:329px;top:643px;font-size:12px;line-height:16px;letter-spacing:-0.331px;">Brad Jameson</div>
<div class="t" style="left:464px;top:643px;font-size:12px;line-height:16px;letter-spacing:-0.172px;">1100 Pico St</div>
<div class="t" style="left:599px;top:643px;font-size:12px;line-height:16px;letter-spacing:-0.585px;">CA</div>
<div class="t" style="left:735px;top:643px;font-size:12px;line-height:16px;letter-spacing:-0.205px;">91340</div>
<div class="t" style="left:847px;top:643px;font-size:12px;line-height:16px;letter-spacing:-0.02px;color:#1515e8;">bradleyj@dx-email.com</div>
<div class="abs" style="left:239px;top:660px;width:15px;height:1px;background:#ababab"></div>
<div class="abs" style="left:285px;top:660px;width:716px;height:1px;background:#d2d2d2"></div>
<svg style="left:300px;top:665px" width="10" height="13" viewBox="0 0 10 13"><path fill="#4a81bc" d="M2.200 13c-1.400 0-2.200-.8-2.200-2.200c0-2 1-3.400 3-4.100l2 2.100l2-2.100c2 .7 3 2.100 3 4.100c0 1.400-.8 2.200-2.200 2.200z"/><ellipse cx="5" cy="3.500" rx="2.900" ry="3.300" fill="#4a81bc"/></svg>
<div class="t" style="left:329px;top:664px;font-size:12px;line-height:16px;letter-spacing:-0.031px;">Brett Wade</div>
<div class="t" style="left:464px;top:664px;font-size:12px;line-height:16px;letter-spacing:-0.003px;">1120 Old Mill Rd.</div>
<div class="t" style="left:599px;top:664px;font-size:12px;line-height:16px;letter-spacing:-0.585px;">CA</div>
<div class="t" style="left:735px;top:664px;font-size:12px;line-height:16px;letter-spacing:-0.027px;">91108</div>
<div class="t" style="left:847px;top:664px;font-size:12px;line-height:16px;letter-spacing:0.05px;color:#1515e8;">brettw@dx-email.com</div>
<div class="abs" style="left:239px;top:681px;width:15px;height:1px;background:#ababab"></div>
<div class="abs" style="left:285px;top:681px;width:716px;height:1px;background:#d2d2d2"></div>
<svg style="left:300px;top:686px" width="10" height="13" viewBox="0 0 10 13"><path fill="#7fb095" d="M2.200 13c-1.400 0-2.200-.8-2.200-2.200c0-2 1-3.400 3-4.100l2 2.100l2-2.100c2 .7 3 2.100 3 4.100c0 1.400-.8 2.200-2.200 2.200z"/><ellipse cx="5" cy="4.300" rx="2.300" ry="2.600" fill="#7fb095"/><path fill="none" stroke="#7fb095" stroke-width="1" d="M1.500 6v-2a3.500 3.500 0 0 1 7 0v2"/></svg>
<div class="t" style="left:329px;top:685px;font-size:12px;line-height:16px;letter-spacing:-0.168px;">Karen Goodson</div>
<div class="t" style="left:464px;top:685px;font-size:12px;line-height:16px;letter-spacing:-0.041px;">309 Monterey Rd</div>
<div class="t" style="left:599px;top:685px;font-size:12px;line-height:16px;letter-spacing:-0.585px;">CA</div>
<div class="t" style="left:735px;top:685px;font-size:12px;line-height:16px;letter-spacing:-0.205px;">91030</div>
<div class="t" style="left:847px;top:685px;font-size:12px;line-height:16px;letter-spacing:-0.053px;color:#1515e8;">kareng@dx-email.com</div>
<div class="abs" style="left:239px;top:702px;width:15px;height:1px;background:#ababab"></div>
<div class="abs" style="left:285px;top:702px;width:716px;height:1px;background:#d2d2d2"></div>
<svg style="left:300px;top:707px" width="10" height="13" viewBox="0 0 10 13"><path fill="#d9603f" d="M2.200 13c-1.400 0-2.200-.8-2.200-2.200c0-2 1-3.400 3-4.100l2 2.100l2-2.100c2 .7 3 2.100 3 4.100c0 1.400-.8 2.200-2.200 2.200z"/><ellipse cx="5" cy="4.300" rx="2.300" ry="2.600" fill="#d9603f"/><path fill="none" stroke="#d9603f" stroke-width="1" d="M1.500 6v-2a3.500 3.500 0 0 1 7 0v2"/></svg>
<div class="t" style="left:329px;top:706px;font-size:12px;line-height:16px;letter-spacing:-0.013px;">Morgan Kennedy</div>
<div class="t" style="left:464px;top:706px;font-size:12px;line-height:16px;letter-spacing:0.006px;">11222 Dilling St</div>
<div class="t" style="left:599px;top:706px;font-size:12px;line-height:16px;letter-spacing:-0.585px;">CA</div>
<div class="t" style="left:735px;top:706px;font-size:12px;line-height:16px;letter-spacing:-0.205px;">91604</div>
<div class="t" style="left:847px;top:706px;font-size:12px;line-height:16px;letter-spacing:0.004px;color:#1515e8;">morgank@dx-email.com</div>
<div class="abs" style="left:239px;top:723px;width:15px;height:1px;background:#ababab"></div>
<div class="abs" style="left:285px;top:723px;width:716px;height:1px;background:#d2d2d2"></div>
<svg style="left:300px;top:728px" width="10" height="13" viewBox="0 0 10 13"><path fill="#4a81bc" d="M2.200 13c-1.400 0-2.200-.8-2.200-2.200c0-2 1-3.400 3-4.100l2 2.100l2-2.100c2 .7 3 2.100 3 4.100c0 1.400-.8 2.200-2.200 2.200z"/><ellipse cx="5" cy="3.500" rx="2.900" ry="3.300" fill="#4a81bc"/></svg>
<div class="t" style="left:329px;top:727px;font-size:12px;line-height:16px;letter-spacing:-0.112px;">Taylor Riley</div>
<div class="t" style="left:464px;top:727px;font-size:12px;line-height:16px;letter-spacing:-0.046px;">7776 Torreyson Dr</div>
<div class="t" style="left:599px;top:727px;font-size:12px;line-height:16px;letter-spacing:-0.585px;">CA</div>
<div class="t" style="left:735px;top:727px;font-size:12px;line-height:16px;letter-spacing:-0.205px;">90046</div>
<div class="t" style="left:847px;top:727px;font-size:12px;line-height:16px;letter-spacing:0.012px;color:#1515e8;">taylorr@dx-email.com</div>
<div class="abs" style="left:239px;top:744px;width:15px;height:1px;background:#ababab"></div>
<div class="abs" style="left:285px;top:744px;width:716px;height:1px;background:#d2d2d2"></div>
<svg style="left:300px;top:749px" width="10" height="13" viewBox="0 0 10 13"><path fill="#666666" d="M2.200 13c-1.400 0-2.200-.8-2.200-2.200c0-2 1-3.400 3-4.100l2 2.100l2-2.100c2 .7 3 2.100 3 4.100c0 1.400-.8 2.200-2.200 2.200z"/><ellipse cx="5" cy="3.500" rx="2.900" ry="3.300" fill="#666666"/></svg>
<div class="t" style="left:329px;top:748px;font-size:12px;line-height:16px;letter-spacing:-0.076px;">Violet Bailey</div>
<div class="t" style="left:464px;top:748px;font-size:12px;line-height:16px;letter-spacing:-0.25px;">1418 Descanso Dr</div>
<div class="t" style="left:599px;top:748px;font-size:12px;line-height:16px;letter-spacing:-0.585px;">CA</div>
<div class="t" style="left:735px;top:748px;font-size:12px;line-height:16px;letter-spacing:-0.027px;">91011</div>
<div class="t" style="left:847px;top:748px;font-size:12px;line-height:16px;letter-spacing:0.031px;color:#1515e8;">violetb@dx-email.com</div>
<div class="abs" style="left:239px;top:765px;width:15px;height:1px;background:#ababab"></div>
<div class="abs" style="left:285px;top:765px;width:716px;height:1px;background:#d2d2d2"></div>
<svg style="left:300px;top:770px" width="10" height="13" viewBox="0 0 10 13"><path fill="#4a81bc" d="M2.200 13c-1.400 0-2.200-.8-2.200-2.200c0-2 1-3.400 3-4.100l2 2.100l2-2.100c2 .7 3 2.100 3 4.100c0 1.400-.8 2.200-2.200 2.200z"/><ellipse cx="5" cy="3.500" rx="2.900" ry="3.300" fill="#4a81bc"/></svg>
<div class="t" style="left:329px;top:769px;font-size:12px;line-height:16px;letter-spacing:-0.007px;">Wally Hobbs</div>
<div class="t" style="left:464px;top:769px;font-size:12px;line-height:16px;letter-spacing:-0.182px;">10385 Shadow Oak Dr</div>
<div class="t" style="left:599px;top:769px;font-size:12px;line-height:16px;letter-spacing:-0.585px;">CA</div>
<div class="t" style="left:735px;top:769px;font-size:12px;line-height:16px;letter-spacing:-0.027px;">91311</div>
<div class="t" style="left:847px;top:769px;font-size:12px;line-height:16px;letter-spacing:-0.045px;color:#1515e8;">wallyh@dx-email.com</div>
<div class="abs" style="left:239px;top:786px;width:15px;height:1px;background:#ababab"></div>
<div class="abs" style="left:255px;top:786px;width:746px;height:1px;background:#d2d2d2"></div>
<div class="abs" style="left:324px;top:619px;width:1px;height:167px;background:#cccccc"></div>
<div class="abs" style="left:459px;top:619px;width:1px;height:167px;background:#cccccc"></div>
<div class="abs" style="left:594px;top:619px;width:1px;height:167px;background:#cccccc"></div>
<div class="abs" style="left:730px;top:619px;width:1px;height:167px;background:#cccccc"></div>
<div class="abs" style="left:842px;top:619px;width:1px;height:167px;background:#cccccc"></div>
<svg style="left:277px;top:802.5px" width="6" height="6"><path fill="#404040" d="M6 0v6h-6z"/></svg>
<div class="t" style="left:288.3px;top:799px;font-size:12px;line-height:16px;letter-spacing:-0.045px;font-weight:bold;">DEPARTMENT: Management</div>
<div class="t" style="left:941.4px;top:799px;font-size:12px;line-height:16px;letter-spacing:0.038px;font-weight:bold;">Count=4</div>
<div class="abs" style="left:239px;top:824px;width:15px;height:1px;background:#ababab"></div>
<div class="abs" style="left:255px;top:824px;width:746px;height:1px;background:#d2d2d2"></div>
<svg style="left:300px;top:829px" width="10" height="13" viewBox="0 0 10 13"><path fill="#4a81bc" d="M2.200 13c-1.400 0-2.200-.8-2.200-2.200c0-2 1-3.400 3-4.100l2 2.100l2-2.100c2 .7 3 2.100 3 4.100c0 1.400-.8 2.200-2.200 2.200z"/><ellipse cx="5" cy="3.500" rx="2.900" ry="3.300" fill="#4a81bc"/></svg>
<div class="t" style="left:329px;top:828px;font-size:12px;line-height:16px;letter-spacing:0.177px;">Arthur Miller</div>
<div class="t" style="left:464px;top:828px;font-size:12px;line-height:16px;letter-spacing:-0.159px;">3800 Homer St.</div>
<div class="t" style="left:599px;top:828px;font-size:12px;line-height:16px;letter-spacing:-0.585px;">CA</div>
<div class="t" style="left:735px;top:828px;font-size:12px;line-height:16px;letter-spacing:-0.205px;">90031</div>
<div class="t" style="left:847px;top:828px;font-size:12px;line-height:16px;letter-spacing:0.02px;color:#1515e8;">arthurm@dx-email.com</div>
<div class="abs" style="left:239px;top:845px;width:15px;height:1px;background:#ababab"></div>
<div class="abs" style="left:285px;top:845px;width:716px;height:1px;background:#d2d2d2"></div>
<svg style="left:300px;top:850px" width="10" height="13" viewBox="0 0 10 13"><path fill="#4a81bc" d="M2.200 13c-1.400 0-2.200-.8-2.200-2.200c0-2 1-3.400 3-4.100l2 2.100l2-2.100c2 .7 3 2.100 3 4.100c0 1.400-.8 2.200-2.200 2.200z"/><ellipse cx="5" cy="3.500" rx="2.900" ry="3.300" fill="#4a81bc"/></svg>
<div class="t" style="left:329px;top:849px;font-size:12px;line-height:16px;letter-spacing:-0.138px;">John Heart</div>
<div class="t" style="left:464px;top:849px;font-size:12px;line-height:16px;letter-spacing:-0.246px;">351 S Hill St.</div>
<div class="t" style="left:599px;top:849px;font-size:12px;line-height:16px;letter-spacing:-0.585px;">CA</div>
<div class="t" style="left:735px;top:849px;font-size:12px;line-height:16px;letter-spacing:-0.205px;">90013</div>
<div class="t" style="left:847px;top:849px;font-size:12px;line-height:16px;letter-spacing:-0.02px;color:#1515e8;">jheart@dx-email.com</div>
<div class="abs" style="left:239px;top:866px;width:15px;height:1px;background:#ababab"></div>
<div class="abs" style="left:285px;top:866px;width:716px;height:1px;background:#d2d2d2"></div>
<svg style="left:300px;top:871px" width="10" height="13" viewBox="0 0 10 13"><path fill="#4a81bc" d="M2.200 13c-1.400 0-2.200-.8-2.200-2.200c0-2 1-3.400 3-4.100l2 2.100l2-2.100c2 .7 3 2.100 3 4.100c0 1.400-.8 2.200-2.200 2.200z"/><ellipse cx="5" cy="3.500" rx="2.900" ry="3.300" fill="#4a81bc"/></svg>
<div class="t" style="left:329px;top:870px;font-size:12px;line-height:16px;letter-spacing:-0.215px;">Robert Reagan</div>
<div class="t" style="left:464px;top:870px;font-size:12px;line-height:16px;letter-spacing:-0.114px;">4 Westmoreland Pl.</div>
<div class="t" style="left:599px;top:870px;font-size:12px;line-height:16px;letter-spacing:-0.585px;">CA</div>
<div class="t" style="left:735px;top:870px;font-size:12px;line-height:16px;letter-spacing:-0.027px;">91103</div>
<div class="t" style="left:847px;top:870px;font-size:12px;line-height:16px;letter-spacing:0.046px;color:#1515e8;">robertr@dx-email.com</div>
<div class="abs" style="left:239px;top:887px;width:15px;height:1px;background:#ababab"></div>
<div class="abs" style="left:285px;top:887px;width:716px;height:1px;background:#d2d2d2"></div>
<svg style="left:300px;top:892px" width="10" height="13" viewBox="0 0 10 13"><path fill="#4a81bc" d="M2.200 13c-1.400 0-2.200-.8-2.200-2.200c0-2 1-3.400 3-4.100l2 2.100l2-2.100c2 .7 3 2.100 3 4.100c0 1.400-.8 2.200-2.200 2.200z"/><ellipse cx="5" cy="5.600" rx="2.900" ry="3" fill="#4a81bc"/><path fill="#fff" d="M1 1h8v2.500h-8z"/><path fill="#777" d="M1 -1h9v4.500h-1.200v-2.800h-6.600z"/></svg>
<div class="t" style="left:329px;top:891px;font-size:12px;line-height:16px;letter-spacing:-0.104px;">Samantha Bright</div>
<div class="t" style="left:464px;top:891px;font-size:12px;line-height:16px;letter-spacing:-0.154px;">5801 Wilshire Blvd.</div>
<div class="t" style="left:599px;top:891px;font-size:12px;line-height:16px;letter-spacing:-0.585px;">CA</div>
<div class="t" style="left:735px;top:891px;font-size:12px;line-height:16px;letter-spacing:-0.205px;">90036</div>
<div class="t" style="left:847px;top:891px;font-size:12px;line-height:16px;letter-spacing:-0.074px;color:#1515e8;">samanthab@dx-email.com</div>
<div class="abs" style="left:239px;top:908px;width:15px;height:1px;background:#ababab"></div>
<div class="abs" style="left:255px;top:908px;width:746px;height:1px;background:#d2d2d2"></div>
<div class="abs" style="left:324px;top:825px;width:1px;height:83px;background:#cccccc"></div>
<div class="abs" style="left:459px;top:825px;width:1px;height:83px;background:#cccccc"></div>
<div class="abs" style="left:594px;top:825px;width:1px;height:83px;background:#cccccc"></div>
<div class="abs" style="left:730px;top:825px;width:1px;height:83px;background:#cccccc"></div>
<div class="abs" style="left:842px;top:825px;width:1px;height:83px;background:#cccccc"></div>
<svg style="left:277px;top:924.5px" width="6" height="6"><path fill="#404040" d="M6 0v6h-6z"/></svg>
<div class="t" style="left:288.3px;top:921px;font-size:12px;line-height:16px;letter-spacing:-0.333px;font-weight:bold;">DEPARTMENT: Sales</div>
<div class="t" style="left:934.2px;top:921px;font-size:12px;line-height:16px;letter-spacing:0.099px;font-weight:bold;">Count=10</div>
<div class="abs" style="left:1007px;top:176px;width:130px;height:130px;background:#fff;border:1px solid #ababab;overflow:hidden">
<svg style="left:0;top:0" width="128" height="128" viewBox="0 0 128 128">
<defs><filter id="pb" x="-10%" y="-10%" width="120%" height="120%"><feGaussianBlur stdDeviation="0.600"/></filter>
<filter id="pb2" x="-20%" y="-20%" width="140%" height="140%"><feGaussianBlur stdDeviation="1.600"/></filter>
<linearGradient id="sk" x1="0" y1="0" x2="1" y2="0"><stop offset="0" stop-color="#dc9866"/><stop offset=".45" stop-color="#f0c09c"/><stop offset="1" stop-color="#d8925e"/></linearGradient>
<linearGradient id="sh" x1="0" y1="0" x2="1" y2="1"><stop offset="0" stop-color="#b6c4ca"/><stop offset=".55" stop-color="#a9b9c0"/><stop offset="1" stop-color="#93a4ac"/></linearGradient>
<linearGradient id="ar" x1="0" y1="0" x2="0" y2="1"><stop offset="0" stop-color="#efbf9a"/><stop offset="1" stop-color="#d69566"/></linearGradient></defs>
<rect x="12" y="0" width="104" height="128" fill="#fdfdfd"/>
<g filter="url(#pb)">
<!-- neck -->
<path fill="#d9996c" d="M47.500 44h22.500v12l-8.600 11l-11-9.500z"/>
<path fill="#c98558" d="M48 48c5 4 16 4 22-1v5c-6 4-16 4-22 0z" opacity=".55"/>
<!-- shirt -->
<path fill="url(#sh)" d="M42 54.400l-16 6c-5 2-7.500 5-8.500 10l-.5 7l4 22l23-8l1 12l43-2l0-10l17-.5l-3.500-20c-1-5-3-9-8-11l-23.500-5.500l-8.600 12.100z"/>
<path fill="#8fa0a8" d="M21 99l23-7.500l.5 2.500l-23 8zM88 91.500l17-.5l.3 2.200l-17.300 .8z" opacity=".8"/>
<path fill="#94a5ad" d="M43 72l3 20l-2 -1zM90 70l-2 21l2 0z" opacity=".7"/>
<path fill="#c3d0d5" d="M28 64c6-3 12-5 16-5l4 6c-6 0-14 1-22 6zM74 60c6 1 13 3 18 6l-2 4c-5-3-11-5-17-5z" opacity=".6"/>
<!-- arm base -->
<path fill="#dc9a6a" d="M40 104l50-2l18 10l-2 14l-45 1.500l-22-1z"/>
<!-- right arm (viewer right) -->
<path fill="url(#ar)" d="M88.500 92.500l16.500-1c3 7 5.500 16 5 24c-.3 5-2 9-4 10.500l-44 1.200c-3-1-3-4 0-5.500l27-10z"/>
<!-- left arm -->
<path fill="url(#ar)" d="M21.500 100l22.500-8l1.500 11c12-1.500 26-2.500 36.500-2.500c5 0 9 2 8.500 5.500c-.5 3-4 5-8 6.500l-30 9c-5 1.500-9 4-14 4c-4 0-7-3-9-8z"/>
<path fill="#c07a48" d="M47 121c10-3 24-7 35-9.500l1 1.500c-10 3-24 7-33 10.500z" opacity=".6"/>
<path fill="#f3cfae" d="M28 102c8-3 12-4 16-5l1 4c-5 1-10 3-15 6zM92 95c5 0 9 0 12-.5l1 4c-4 .5-8 1-12 1z" opacity=".45"/>
<path fill="#6f7f88" d="M34 124l6 2l1 2h-6z"/>
<!-- face -->
<path fill="url(#sk)" d="M44.500 26c0-10 6-16 15-16s15 6 15 16c0 8-2 14-5 18c-3 4.500-6.500 7-10 7s-7-2.500-10-7c-3-4-5-10-5-18z"/>
<ellipse cx="43.600" cy="32" rx="2" ry="4" fill="#d8906a"/><ellipse cx="75" cy="32" rx="2" ry="4" fill="#d8906a"/>
<ellipse cx="51" cy="36" rx="3.500" ry="2.500" fill="#e89a80" opacity=".5"/><ellipse cx="68" cy="36" rx="3.500" ry="2.500" fill="#e89a80" opacity=".5"/>
<!-- hair -->
<path fill="#8a5d33" d="M42.500 29c-2.500-9-1.500-18 3.500-23c3-3.500 8-5 13-5c6 0 11 1.500 14 5c4.500 5 5 14 2.500 23l-2-3c.5-4-.5-7-3-9.500c-3-2-7-2.500-11.500-2.500c-4.500 0-8.500 .5-11.500 3c-2.500 2.500-3.500 5.500-3 10z"/>
<path fill="#6e4523" d="M45 12c2-5 6-8 10-9l-2 4 5-4 1 4 4-4 1 4 4-2c3 2 5 5 6 9c-3-3-7-4-14-4s-12 1-15 2z" opacity=".75"/>
<path fill="#b58552" d="M50 5l3-2.500l1 3zM58 3.500l3-1.500v3zM66 5l3 0l-1 3z" opacity=".8"/>
<!-- eyes/brows -->
<path fill="#8a5a36" d="M48.500 24.500c2.500-1.500 5.500-1.500 8 0v1c-2.500-1-5.500-1-8 0zM62 24.500c2.500-1.500 5.500-1.500 8 0v1c-2.500-1-5.500-1-8 0z"/>
<ellipse cx="52.500" cy="27.800" rx="2.300" ry="1.100" fill="#fff"/><ellipse cx="66" cy="27.800" rx="2.300" ry="1.100" fill="#fff"/>
<circle cx="52.500" cy="27.800" r="1.100" fill="#4d6a8c"/><circle cx="66" cy="27.800" r="1.100" fill="#4d6a8c"/>
<!-- nose/mouth -->
<path fill="#d08a62" d="M57.500 28l-1.500 7.500c1.500 1 5 1 6.500 0l-1.500-7.500z" opacity=".4"/>
<path fill="#c0564c" d="M52.500 38.700c4.500 1.300 9.500 1.300 14 0c-1 4.300-3.500 6.300-7 6.300s-6-2-7-6.300z"/>
<path fill="#fff" d="M54 39.600c3.500 .9 7.500 .9 11 0c-.8 2.300-2.600 3.200-5.500 3.200s-4.700-.9-5.500-3.200z"/>
</g></svg></div>
<div class="t" style="left:1152px;top:196.5px;font-size:24px;line-height:28px;letter-spacing:-0.376px;">Bart Arnaz</div>
<div class="t" style="left:1152px;top:232.8px;font-size:20px;line-height:24px;letter-spacing:-0.055px;">Director of Engineering</div>
<div class="abs" style="left:1150px;top:258.800px;width:28px;height:28px;border-radius:14px;background:#fdfdfd"></div>
<div class="abs" style="left:1188px;top:258.800px;width:28px;height:28px;border-radius:14px;background:#fdfdfd"></div>
<div class="abs" style="left:1226px;top:258.800px;width:28px;height:28px;border-radius:14px;background:#fdfdfd"></div>
<div class="abs" style="left:1264px;top:258.800px;width:28px;height:28px;border-radius:14px;background:#fdfdfd"></div>
<svg style="left:1158px;top:268px" width="12" height="12"><path fill="#444" d="M0.500 0h11v8.500h-3l-2.500 3v-3h-5.500z"/></svg>
<svg style="left:1196px;top:267px" width="12" height="12" viewBox="0 0 12 12"><path fill="#444" d="M1.500 1.200l1.800-1l2.200 3.300l-1.300 1.300c.7 1.500 1.700 2.600 3.200 3.500l1.400-1.200l3 2.300l-1.200 1.700c-1 .6-2.300.3-3.700-.5c-2.600-1.500-4.600-3.800-5.600-6.500c-.5-1.300-.6-2.300.2-2.900z"/></svg>
<svg style="left:1234px;top:268.500px" width="12" height="9"><path fill="#444" d="M0 0.500h8.500v2.500l3.500-2.500v8l-3.500-2.500v2.500h-8.500z"/></svg>
<svg style="left:1272px;top:268.500px" width="12" height="9"><path fill="#444" d="M0 0h12v9h-12z"/><path fill="none" stroke="#fdfdfd" stroke-width="1" d="M0.500 1l5.500 4.300l5.500-4.300"/></svg>
<div class="abs" style="left:1007px;top:315px;width:420px;height:1px;background:#c6c6c6"></div>
<div class="t" style="left:1283.2px;top:329.5px;font-size:12px;line-height:16px;letter-spacing:0px;transform:scaleX(0.9034);transform-origin:0 0;">EVALUATIONS</div>
<div class="abs" style="left:1007px;top:348px;width:420px;height:595px;background:#fff;border:1px solid #ababab"></div>
<div class="abs" style="left:1008px;top:349px;width:418px;height:20px;background:#f0f0f0"></div>
<div class="abs" style="left:1370px;top:326px;width:57px;height:23px;background:#f0f0f0;border:1px solid #ababab;border-bottom:none"></div>
<div class="t" style="left:1382px;top:329.5px;font-size:12px;line-height:16px;letter-spacing:0px;color:#0072c6;transform:scaleX(0.8581);transform-origin:0 0;">TASKS</div>
<div class="abs" style="left:1008px;top:369px;width:418px;height:1px;background:#ababab"></div>
<div class="abs" style="left:1107px;top:349px;width:1px;height:20px;background:#ababab"></div>
<div class="t" style="left:1012.2px;top:352px;font-size:12px;line-height:16px;letter-spacing:0px;transform:scaleX(0.8832);transform-origin:0 0;">DUE DATE</div>
<div class="t" style="left:1112px;top:352px;font-size:12px;line-height:16px;letter-spacing:0px;transform:scaleX(0.8304);transform-origin:0 0;">SUBJECT</div>
<div class="t" style="left:1012.2px;top:373px;font-size:12px;line-height:16px;letter-spacing:0.494px;font-weight:bold;">02/28/2013</div>
<div class="t" style="left:1112px;top:373px;font-size:12px;line-height:16px;letter-spacing:-0.01px;">Google AdWords Strategy</div>
<div class="t" style="left:1013.4px;top:391px;font-size:12px;line-height:16px;letter-spacing:-0.002px;">Make final decision on whether we are going to increase our Google</div>
<div class="t" style="left:1013.4px;top:407px;font-size:12px;line-height:16px;letter-spacing:-0.002px;">AdWord spend based on our 2013 marketing plan.</div>
<div class="t" style="left:1013.4px;top:423px;font-size:12px;line-height:16px;letter-spacing:0.005px;">We must seriously consider a higher spend if we are going to double</div>
<div class="t" style="left:1013.4px;top:439px;font-size:12px;line-height:16px;letter-spacing:-0.153px;">revenues this year.</div>
<div class="abs" style="left:1008px;top:454px;width:418px;height:1px;background:#c8c8c8"></div>
<div class="t" style="left:1012.2px;top:458px;font-size:12px;line-height:16px;letter-spacing:0.494px;font-weight:bold;">03/07/2013</div>
<div class="t" style="left:1112px;top:458px;font-size:12px;line-height:16px;letter-spacing:-0.247px;">Create 2013 R&amp;D Plans</div>
<div class="t" style="left:1013.4px;top:476px;font-size:12px;line-height:16px;letter-spacing:-0.048px;">Create 2013 R&amp;D Plan Report for CEO and include information on products</div>
<div class="t" style="left:1013.4px;top:492px;font-size:12px;line-height:16px;letter-spacing:0.008px;">under consideration and final decisions as to which products will be</div>
<div class="t" style="left:1013.4px;top:508px;font-size:12px;line-height:16px;letter-spacing:-0.095px;">depracated.</div>
<div class="t" style="left:1013.4px;top:524px;font-size:12px;line-height:16px;letter-spacing:-0.092px;">Bart Arnaz: Done. You should review this Arthur as there are issues we need</div>
<div class="t" style="left:1013.4px;top:540px;font-size:12px;line-height:16px;letter-spacing:0.042px;">to consider.</div>
<div class="abs" style="left:1008px;top:555px;width:418px;height:1px;background:#c8c8c8"></div>
<div class="t" style="left:1012.2px;top:559px;font-size:12px;line-height:16px;letter-spacing:0.494px;font-weight:bold;">05/16/2013</div>
<div class="t" style="left:1112px;top:559px;font-size:12px;line-height:16px;letter-spacing:-0.161px;">Prepare Product Recall Report</div>
<div class="t" style="left:1013.4px;top:577px;font-size:12px;line-height:16px;letter-spacing:-0.04px;">Bart, this recall was an absolute disaster. Your report better be on my desk</div>
<div class="t" style="left:1013.4px;top:593px;font-size:12px;line-height:16px;letter-spacing:0.128px;">tomorrow. This is killing our bottom-line.</div>
<div class="t" style="left:1013.4px;top:609px;font-size:12px;line-height:16px;letter-spacing:-0.152px;">Bart Arnaz: Yes, it's unacceptable.</div>
<div class="abs" style="left:1008px;top:624px;width:418px;height:1px;background:#c8c8c8"></div>
<div class="t" style="left:1012.2px;top:628px;font-size:12px;line-height:16px;letter-spacing:0.494px;font-weight:bold;">01/31/2014</div>
<div class="t" style="left:1112px;top:628px;font-size:12px;line-height:16px;letter-spacing:-0.105px;">Review New HDMI Specification</div>
<div class="t" style="left:1013.4px;top:646px;font-size:12px;line-height:16px;letter-spacing:0.001px;">Bart, this is already delayed too long. I need your report on the new HDMI</div>
<div class="t" style="left:1013.4px;top:662px;font-size:12px;line-height:16px;letter-spacing:0.06px;">specification and how we plan on getting to market.</div>
<div class="t" style="left:1013.4px;top:678px;font-size:12px;line-height:16px;letter-spacing:0.053px;">Bart Arnaz: I understand and I'm working on it. Getting input from Industry</div>
<div class="t" style="left:1013.4px;top:694px;font-size:12px;line-height:16px;letter-spacing:-0.187px;">types.</div>
<div class="abs" style="left:1008px;top:709px;width:418px;height:1px;background:#c8c8c8"></div>
<div class="t" style="left:1012.2px;top:713px;font-size:12px;line-height:16px;letter-spacing:0.494px;font-weight:bold;">03/19/2014</div>
<div class="t" style="left:1112px;top:713px;font-size:12px;line-height:16px;letter-spacing:-0.01px;">Report on the State of Engineering Dept</div>
<div class="t" style="left:1013.4px;top:731px;font-size:12px;line-height:16px;letter-spacing:-0.012px;">Under a lot of pressure from CEO to figure out cause of refunds. Need you to</div>
<div class="t" style="left:1013.4px;top:747px;font-size:12px;line-height:16px;letter-spacing:0.075px;">send me a state of engineering dept report so we can get to the bottom of</div>
<div class="t" style="left:1013.4px;top:763px;font-size:12px;line-height:16px;letter-spacing:0.018px;">the problems.</div>
<div class="abs" style="left:1008px;top:778px;width:418px;height:1px;background:#c8c8c8"></div>
<div class="t" style="left:1012.2px;top:782px;font-size:12px;line-height:16px;letter-spacing:0.494px;font-weight:bold;">03/25/2014</div>
<div class="t" style="left:1112px;top:782px;font-size:12px;line-height:16px;letter-spacing:-0.072px;">Engineering Dept Budget Request Report</div>
<div class="t" style="left:1013.4px;top:800px;font-size:12px;line-height:16px;letter-spacing:-0.047px;">Bart, please see subject. You have to send me your budget report otherwise</div>
<div class="t" style="left:1013.4px;top:816px;font-size:12px;line-height:16px;letter-spacing:0.006px;">you may end up with cut-backs.</div>
<div class="t" style="left:1013.4px;top:832px;font-size:12px;line-height:16px;letter-spacing:-0.123px;">Bart Arnaz: Cutbacks? We are overwhelmed as it is. I will talk to CEO about</div>
<div class="t" style="left:1013.4px;top:848px;font-size:12px;line-height:16px;letter-spacing:-0.11px;">this.</div>
<div class="abs" style="left:1008px;top:863px;width:418px;height:1px;background:#c8c8c8"></div>
<div class="t" style="left:1012.2px;top:867px;font-size:12px;line-height:16px;letter-spacing:0.494px;font-weight:bold;">04/20/2014</div>
<div class="t" style="left:1112px;top:867px;font-size:12px;line-height:16px;letter-spacing:-0.06px;">Approve Vacation Request</div>
<div class="t" style="left:1013.4px;top:885px;font-size:12px;line-height:16px;letter-spacing:-0.033px;">Planning a trip with the family for 2 weeks. Can you give me the ok so I can</div>
<div class="t" style="left:1013.4px;top:901px;font-size:12px;line-height:16px;letter-spacing:-0.051px;">submit this to HR?</div>
<div class="t" style="left:1016.7px;top:917px;font-size:12px;line-height:16px;letter-spacing:-0.145px;">Bart Arnaz: Will take a look as soon as I can.</div>
<div class="t" style="left:16.5px;top:950px;font-size:18px;line-height:22px;letter-spacing:-0.527px;color:#404040;">Employees</div>
<div class="t" style="left:128.3px;top:950px;font-size:18px;line-height:22px;letter-spacing:0px;color:#8c8c8c;transform:scaleX(0.8737);transform-origin:0 0;">Tasks</div>
<div class="abs" style="left:169px;top:948px;width:23px;height:15px;border-radius:8px;background:#e8606a"></div>
<div class="t" style="left:173.5px;top:949px;font-size:11px;line-height:13px;letter-spacing:0.633px;color:#fff;">87</div>
<div class="t" style="left:219.3px;top:950px;font-size:18px;line-height:22px;letter-spacing:-0.369px;color:#8c8c8c;">Customers</div>
<div class="t" style="left:330.5px;top:950px;font-size:18px;line-height:22px;letter-spacing:-0.279px;color:#8c8c8c;">Products</div>
<div class="t" style="left:427.5px;top:950px;font-size:18px;line-height:22px;letter-spacing:0px;color:#8c8c8c;transform:scaleX(0.8773);transform-origin:0 0;">Sales</div>
<div class="t" style="left:494.5px;top:950px;font-size:18px;line-height:22px;letter-spacing:0.172px;color:#8c8c8c;">Opportunities</div>
<svg style="left:618px;top:958px" width="19" height="4"><circle cx="2" cy="2" r="1.700" fill="#666"/><circle cx="9.300" cy="2" r="1.700" fill="#666"/><circle cx="16.600" cy="2" r="1.700" fill="#666"/></svg>
<div class="abs" style="left:1px;top:974px;width:1438px;height:1px;background:#ababab"></div>
<div class="abs" style="left:1px;top:975px;width:1438px;height:24px;background:#f0f0f0"></div>
<div class="t" style="left:5.5px;top:979.5px;font-size:12px;line-height:16px;letter-spacing:0px;transform:scaleX(0.8623);transform-origin:0 0;">RECORDS: 51</div>
<div class="abs" style="left:1363px;top:976px;width:22px;height:22px;background:#adadad"></div>
<svg style="left:1367px;top:981px" width="14" height="12"><rect x="0.500" y="0.500" width="13" height="11" fill="#a6a6a6" stroke="#4d4d4d"/><rect x="0" y="0" width="5" height="12" fill="#4d4d4d"/></svg>
<svg style="left:1390px;top:981px" width="14" height="13" viewBox="0 0 14 13"><path fill="#fff" stroke="#555" stroke-width="1" d="M0.500 0.500h5l1.500 1l1.500-1h5v10.500h-5l-1.500 1l-1.500-1h-5z"/><path fill="#9a9a9a" d="M2 2.500h4v1h-4zM2 4.500h4v1h-4zM2 6.500h4v1h-4zM2 8.500h4v1h-4zM8 2.500h4v1h-4zM8 4.500h4v1h-4zM8 6.500h4v1h-4zM8 8.500h4v1h-4z"/></svg>
<svg style="left:1429px;top:989px" width="8" height="8"><rect x="6" y="0" width="1" height="1" fill="#555"/><rect x="4" y="2" width="1" height="1" fill="#555"/><rect x="6" y="2" width="1" height="1" fill="#555"/><rect x="2" y="4" width="1" height="1" fill="#555"/><rect x="4" y="4" width="1" height="1" fill="#555"/><rect x="6" y="4" width="1" height="1" fill="#555"/><rect x="0" y="6" width="1" height="1" fill="#555"/><rect x="2" y="6" width="1" height="1" fill="#555"/><rect x="4" y="6" width="1" height="1" fill="#555"/><rect x="6" y="6" width="1" height="1" fill="#555"/></svg>
<div id="frame"></div>
<div class="abs" style="left:0;top:0;width:1px;height:68px;background:#b9aca0;z-index:51"></div>
<div class="abs" style="left:1439px;top:0;width:1px;height:68px;background:#b9aca0;z-index:51"></div>
</body>
</html>
